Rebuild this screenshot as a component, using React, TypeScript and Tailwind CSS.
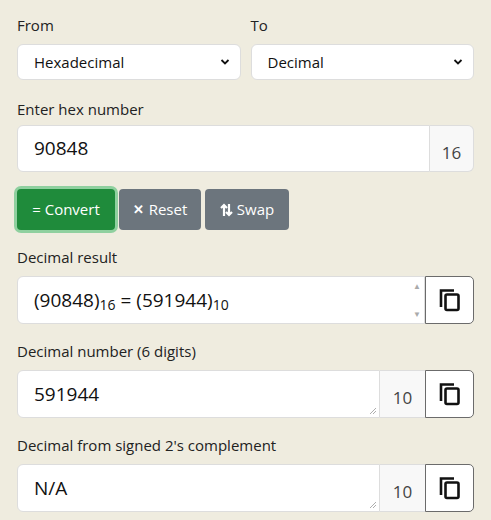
import React from "react";

const Copy = () => (
  <svg width="22" height="24" viewBox="0 0 22 24" fill="none" stroke="#111" strokeWidth="2.6">
    <path d="M2 19V2.5h13" />
    <rect x="6.5" y="6.5" width="13" height="15.5" rx="1.5" />
  </svg>
);

const CopyBtn = () => (
  <div className="w-[49px] shrink-0 flex items-center justify-center bg-white border border-[#6b6b6b] rounded-r-[5px]">
    <Copy />
  </div>
);

const Grip = () => (
  <svg className="absolute right-[2px] bottom-[2px]" width="8" height="8" viewBox="0 0 8 8" stroke="#999" strokeWidth="0.8">
    <path d="M7 1L1 7M7 4L4 7" />
  </svg>
);

function Row({ value, base }: { value: string; base: string }) {
  return (
    <div className="flex h-[48px] mt-[8px]">
      <div className="relative flex-1 bg-white border border-[#ddd] rounded-l-[6px] flex items-center pl-[16px] text-[19px] text-[#111]">
        {value}
        <Grip />
      </div>
      <div className="w-[45px] bg-[#f8f8f8] border-y border-[#ddd] flex items-end justify-center pb-[7px] text-[17px] text-[#444]">{base}</div>
      <CopyBtn />
    </div>
  );
}

export default function App() {
  return (
    <div className="w-[491px] h-[520px] bg-[#efecdf] px-[17px] pt-[14px] text-[#222] overflow-hidden" style={{ fontFamily: '"Open Sans","Noto Sans",sans-serif' }}>
      <div className="grid grid-cols-2 gap-[10px]">
        {[["From", "Hexadecimal"], ["To", "Decimal"]].map(([l, v]) => (
          <div key={l}>
            <div className="text-[15px] h-[22px]">{l}</div>
            <div className="mt-[8px] h-[36px] bg-white border border-[#ddd] rounded-[6px] flex items-center justify-between pl-[16px] pr-[10px] text-[15px] text-[#111]">
              {v}
              <svg width="10" height="8" viewBox="0 0 10 8"><path d="M1.5 2l3.5 3.5L8.5 2" stroke="#111" strokeWidth="1.8" fill="none" /></svg>
            </div>
          </div>
        ))}
      </div>
      <div className="text-[15px] mt-[18px] h-[22px]">Enter hex number</div>
      <div className="flex h-[47px] mt-[5px]">
        <div className="flex-1 bg-white border border-[#ddd] rounded-l-[6px] flex items-center pl-[16px] text-[19px] text-[#111]">90848</div>
        <div className="w-[44px] bg-[#f8f8f8] border border-l-0 border-[#ddd] rounded-r-[6px] flex items-end justify-center pb-[6px] text-[17px] text-[#444]">16</div>
      </div>
      <div className="flex gap-[4px] mt-[17px] text-[15px] text-white">
        <div className="h-[41px] w-[98px] bg-[#1f8b3b] rounded-[4px] ring-[3px] ring-[#8fd09f] flex items-center justify-center">= Convert</div>
        <div className="h-[41px] w-[82px] bg-[#6c757d] rounded-[4px] flex items-center justify-center gap-[5px]"><span className="text-[13px] font-bold">✕</span>Reset</div>
        <div className="h-[41px] w-[84px] bg-[#6c757d] rounded-[4px] flex items-center justify-center gap-[4px]">
          <svg width="13" height="14" viewBox="0 0 13 14" fill="none" stroke="white" strokeWidth="2.2"><path d="M4 13V2M1 5l3-3 3 3M9 1v11M6 9l3 3 3-3" /></svg>
          Swap
        </div>
      </div>
      <div className="text-[15px] mt-[16px] h-[22px]">Decimal result</div>
      <div className="flex h-[48px] mt-[8px]">
        <div className="relative flex-1 bg-white border border-[#ddd] rounded-l-[6px] flex items-center pl-[16px] text-[19px] text-[#111]">
          <span>(90848)<sub className="text-[14px]">16</sub> = (591944)<sub className="text-[14px]">10</sub></span>
          <div className="absolute right-[3px] top-[3px] bottom-[3px] flex flex-col justify-between text-[#aaa] text-[8px]"><span>▲</span><span>▼</span></div>
        </div>
        <CopyBtn />
      </div>
      <div className="text-[15px] mt-[16px] h-[22px]">Decimal number (6 digits)</div>
      <Row value="591944" base="10" />
      <div className="text-[15px] mt-[16px] h-[22px]">Decimal from signed 2's complement</div>
      <Row value="N/A" base="10" />
    </div>
  );
}
